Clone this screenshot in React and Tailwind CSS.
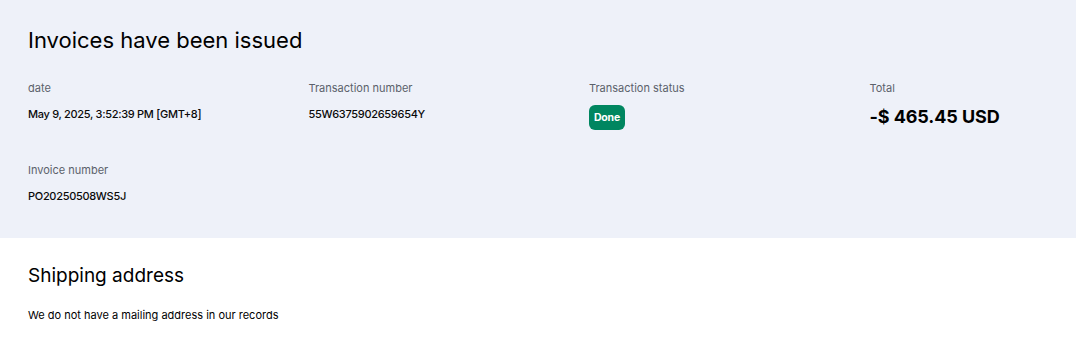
import React from 'react';

const fields = [
  { label: 'date', value: 'May 9, 2025, 3:52:39 PM [GMT+8]' },
  { label: 'Transaction number', value: '55W6375902659654Y' },
  { label: 'Transaction status', badge: 'Done' },
  { label: 'Total', total: '-$ 465.45 USD' },
];

const Field = ({ label, value, badge, total }) => (
  <div>
    <p className="text-[11px] leading-4 text-[#5b616b]">{label}</p>
    {value && <p className="mt-[10px] text-[11px] leading-4 font-medium tracking-[-0.3px] text-[#0a0a0a]">{value}</p>}
    {badge && (
      <span className="mt-[9px] inline-flex h-[25px] w-[36px] items-center justify-center rounded-md bg-[#008660] text-[10.5px] font-bold tracking-[-0.2px] text-white">
        {badge}
      </span>
    )}
    {total && <p className="mt-[9px] text-[18px] leading-6 font-bold tracking-[-0.1px] text-black">{total}</p>}
  </div>
);

export default function App() {
  return (
    <div className="w-[1076px] h-[350px] bg-white font-['Inter','Noto_Sans',sans-serif] text-black">
      <section className="bg-[#eef1f9] px-7 pt-[26px] pb-[34px]">
        <h1 className="text-[22px] leading-7 font-normal">Invoices have been issued</h1>
        <div className="mt-[26px] grid grid-cols-[repeat(3,280.5px)_1fr]">
          {fields.map(f => <Field key={f.label} {...f} />)}
        </div>
        <div className="mt-[32px] grid grid-cols-[repeat(3,280.5px)_1fr]">
          <Field label="Invoice number" value="PO20250508WS5J" />
        </div>
      </section>
      <section className="px-7 pt-[24px]">
        <h2 className="text-[19px] leading-7 font-normal">Shipping address</h2>
        <p className="mt-[17px] text-[11px] leading-4">We do not have a mailing address in our records</p>
      </section>
    </div>
  );
}
